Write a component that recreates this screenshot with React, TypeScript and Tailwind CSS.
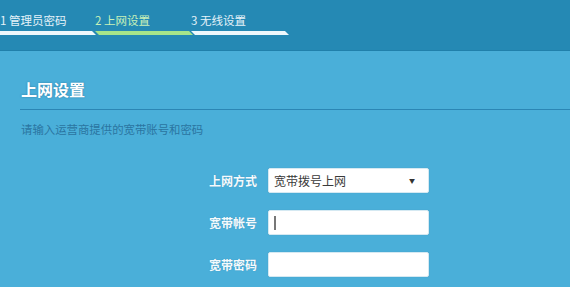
import React from "react";

const font = { fontFamily: '"Noto Sans CJK SC", "Microsoft YaHei", sans-serif' };

function Step({ label, active, first }: { label: string; active?: boolean; first?: boolean }) {
  return (
    <div className={`flex flex-col ${first ? "w-[95px]" : "w-[96px]"}`}>
      <div
        className={`text-[11.5px] leading-[16px] h-[16px] whitespace-nowrap ${
          active ? "text-[#c9f2b8]" : "text-[#e6f3f9]"
        }`}
      >
        {label}
      </div>
      <div
        className={`mt-[3px] h-[4px] ${first ? "w-[96px]" : "w-[98px]"} ${
          active ? "bg-[#a6e58a]" : "bg-[#eef8fc]"
        } ${
          first
            ? "[clip-path:polygon(0_0,calc(100%-4px)_0,100%_100%,0_100%)]"
            : "[clip-path:polygon(0_0,calc(100%-4px)_0,100%_100%,4px_100%)]"
        }`}
      />
    </div>
  );
}

function Row({ label, children }: { label: string; children: React.ReactNode }) {
  return (
    <div className="flex items-center h-[25px]">
      <div className="w-[258px] text-right pr-[1px] text-[12px] font-bold text-[#f4fafd] [text-shadow:0_0_1px_#3a8fb8]">
        {label}
      </div>
      <div className="ml-[10px] w-[161px] h-[25px] bg-white border border-[#d5e9f2] rounded-[2px] shadow-[0_0_1px_rgba(0,0,0,0.15)] flex items-center px-[5px]">
        {children}
      </div>
    </div>
  );
}

export default function App() {
  return (
    <div className="w-[570px] h-[287px] overflow-hidden bg-[#4aafd9]" style={font}>
      <div className="h-[51px] bg-[#2589b4] border-b border-[#2080ab] pt-[12px] flex">
        <Step label="1 管理员密码" first />
        <Step label="2 上网设置" active />
        <Step label="3 无线设置" />
      </div>
      <div className="pl-[20px]">
        <div className="mt-[27px] pl-[1px] text-[16px] leading-[22px] font-bold text-white [text-shadow:0_0_2px_#2a7aa3]">
          上网设置
        </div>
        <div className="mt-[9px] h-[1px] bg-[#2b86b4]" />
        <div className="mt-[11px] pl-[1px] text-[11.4px] leading-[16px] text-[#2b75a1]">
          请输入运营商提供的宽带账号和密码
        </div>
      </div>
      <div className="mt-[31px] flex flex-col gap-[17px]">
        <Row label="上网方式">
          <span className="text-[12px] text-[#3a3a3a] flex-1">宽带拨号上网</span>
          <span className="text-[6px] text-[#333] mr-[8px]">▼</span>
        </Row>
        <Row label="宽带帐号">
          <span className="w-[2px] h-[14px] bg-[#777]" />
        </Row>
        <Row label="宽带密码">
          <span />
        </Row>
      </div>
    </div>
  );
}
